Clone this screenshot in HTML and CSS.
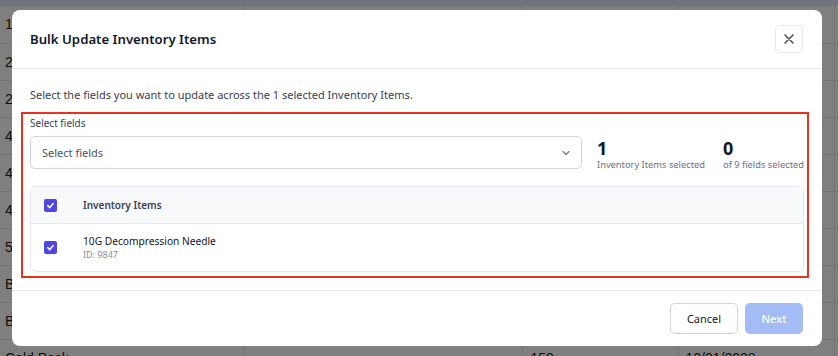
FILE: index.html
```html
<!DOCTYPE html>
<html lang="en">
<head>
  <meta charset="UTF-8" />
  <title>Bulk Update Inventory Items</title>
  <link rel="stylesheet" href="styles.css">
</head>
<body>
  <div class="page">
    <div class="top-band"></div>
    <table class="bg-table">
      <tr><td>14G Decompression Needle</td><td></td><td>25</td><td>03/14/2027</td><td></td></tr>
      <tr><td>22G IV Catheter</td><td></td><td>120</td><td>06/30/2027</td><td></td></tr>
      <tr><td>24G IV Catheter</td><td></td><td>80</td><td>06/30/2027</td><td></td></tr>
      <tr><td>4x4 Gauze Pads</td><td></td><td>400</td><td>11/01/2028</td><td></td></tr>
      <tr><td>4.5 in Bandage Roll</td><td></td><td>60</td><td>09/15/2028</td><td></td></tr>
      <tr><td>4.5 in Elastic Wrap</td><td></td><td>45</td><td>09/15/2028</td><td></td></tr>
      <tr><td>5ml Syringe</td><td></td><td>200</td><td>01/20/2028</td><td></td></tr>
      <tr><td>Burn Dressing</td><td></td><td>30</td><td>04/10/2028</td><td></td></tr>
      <tr><td>BVM Adult</td><td></td><td>12</td><td>08/05/2029</td><td></td></tr>
      <tr><td>Cold Pack</td><td></td><td>150</td><td>12/01/2028</td><td></td></tr>
    </table>
  </div>

  <div class="overlay"></div>

  <div class="modal">
    <div class="modal-header">
      <h2>Bulk Update Inventory Items</h2>
      <button class="close-btn" aria-label="Close">
        <svg width="12" height="12" viewBox="0 0 12 12">
          <path d="M2 2 L10 10 M10 2 L2 10" stroke="#374151" stroke-width="1.4" stroke-linecap="round" fill="none"/>
        </svg>
      </button>
    </div>

    <div class="modal-body">
      <p class="intro">Select the fields you want to update across the 1 selected Inventory Items.</p>

      <div class="highlight">
        <div class="field-row">
          <div class="field">
            <label class="field-label">Select fields</label>
            <div class="select">
              <span>Select fields</span>
              <svg width="10" height="10" viewBox="0 0 10 10">
                <path d="M2 3.5 L5 6.5 L8 3.5" stroke="#6b7280" stroke-width="1.1" fill="none" stroke-linecap="round" stroke-linejoin="round"/>
              </svg>
            </div>
          </div>
          <div class="stat">
            <div class="stat-num">1</div>
            <div class="stat-label">Inventory Items selected</div>
          </div>
          <div class="stat">
            <div class="stat-num">0</div>
            <div class="stat-label">of 9 fields selected</div>
          </div>
        </div>

        <div class="items">
          <div class="items-head">
            <span class="check"><svg width="9" height="9" viewBox="0 0 10 10"><path d="M2 5.2 L4.2 7.3 L8 2.8" stroke="#fff" stroke-width="1.8" fill="none" stroke-linecap="round" stroke-linejoin="round"/></svg></span>
            <span class="head-title">Inventory Items</span>
          </div>
          <div class="item-row">
            <span class="check"><svg width="9" height="9" viewBox="0 0 10 10"><path d="M2 5.2 L4.2 7.3 L8 2.8" stroke="#fff" stroke-width="1.8" fill="none" stroke-linecap="round" stroke-linejoin="round"/></svg></span>
            <div class="item-text">
              <div class="item-name">10G Decompression Needle</div>
              <div class="item-id">ID: 9847</div>
            </div>
          </div>
        </div>
      </div>
    </div>

    <div class="modal-footer">
      <button class="btn btn-cancel">Cancel</button>
      <button class="btn btn-next">Next</button>
    </div>
  </div>
</body>
</html>
```

FILE: styles.css
```css
* {
  margin: 0;
  padding: 0;
  box-sizing: border-box;
}

body {
  font-family: "Noto Sans", "Open Sans", sans-serif;
  width: 838px;
  height: 356px;
  overflow: hidden;
  background: #ffffff;
}

/* page behind the dialog */
.page {
  width: 838px;
}

.top-band {
  height: 6px;
  background: #e2e8f7;
}

.bg-table {
  border-collapse: collapse;
  table-layout: fixed;
  width: 844px;
  font-family: "Liberation Sans", sans-serif;
  font-size: 14px;
  color: #1a1a1a;
}

.bg-table td {
  height: 37px;
  border-bottom: 1px solid #e6e6e6;
  border-right: 1px solid #e6e6e6;
  padding: 0 7px;
  white-space: nowrap;
  overflow: hidden;
}

.bg-table td:nth-child(1) { width: 243px; padding-left: 5px; }
.bg-table td:nth-child(2) { width: 279px; }
.bg-table td:nth-child(3) { width: 156px; padding-left: 8px; }
.bg-table td:nth-child(4) { width: 156px; }
.bg-table td:nth-child(5) { width: 10px; }

.overlay {
  position: absolute;
  inset: 0;
  background: rgba(0, 0, 0, 0.5);
}

/* dialog */
.modal {
  position: absolute;
  left: 12px;
  top: 10px;
  width: 810px;
  height: 336px;
  background: #ffffff;
  border-radius: 8px;
  display: flex;
  flex-direction: column;
  color: #111827;
}

.modal-header {
  height: 61px;
  display: flex;
  align-items: center;
  justify-content: space-between;
  padding: 0 19px 0 18px;
  border-bottom: 1px solid #e5e7eb;
}

.modal-header h2 {
  font-size: 13.2px;
  font-weight: 600;
  color: #111827;
}

.close-btn {
  width: 28px;
  height: 28px;
  border: 1px solid #e5e7eb;
  border-radius: 5px;
  background: #ffffff;
  display: flex;
  align-items: center;
  justify-content: center;
}

.modal-body {
  padding: 17px 18px 12px 18px;
  flex: 1;
}

.intro {
  font-size: 11px;
  color: #374151;
  line-height: 18px;
  margin-bottom: 8px;
}

.highlight {
  border: 2px solid #e8321f;
  margin: 0 -5px 0 -9px;
  padding: 2px 3px 4px 7px;
}

.field-row {
  display: flex;
  align-items: flex-start;
}

.field {
  width: 552px;
}

.field-label {
  display: block;
  font-size: 10px;
  line-height: 14px;
  color: #374151;
  margin-bottom: 6px;
}

.select {
  height: 33px;
  border: 1px solid #d1d5db;
  border-radius: 5px;
  display: flex;
  align-items: center;
  justify-content: space-between;
  padding: 0 10px 0 11px;
  font-size: 11px;
  color: #4b5563;
}

.stat {
  margin-top: 22px;
  margin-left: 15px;
}

.stat + .stat {
  margin-left: 18px;
}

.stat-num {
  font-size: 18px;
  font-weight: 700;
  line-height: 20px;
  color: #111827;
}

.stat-label {
  font-size: 9.3px;
  line-height: 13px;
  color: #6b7280;
  white-space: nowrap;
}

.items {
  margin-top: 15px;
  border: 1px solid #e5e7eb;
  border-radius: 6px;
  overflow: hidden;
}

.items-head {
  height: 37px;
  background: #f8f9fb;
  border-bottom: 1px solid #e5e7eb;
  display: flex;
  align-items: center;
  padding-left: 13px;
}

.check {
  width: 13px;
  height: 13px;
  border-radius: 2px;
  background: #5046e5;
  display: inline-flex;
  align-items: center;
  justify-content: center;
  flex-shrink: 0;
}

.head-title {
  margin-left: 26px;
  font-size: 10px;
  font-weight: 600;
  color: #374151;
}

.item-row {
  height: 47px;
  display: flex;
  align-items: center;
  padding-left: 13px;
}

.item-text {
  margin-left: 26px;
}

.item-name {
  font-size: 10.2px;
  line-height: 14px;
  color: #111827;
}

.item-id {
  font-size: 9px;
  line-height: 13px;
  color: #8b929c;
}

.modal-footer {
  height: 57px;
  border-top: 1px solid #e5e7eb;
  display: flex;
  align-items: center;
  justify-content: flex-end;
  gap: 7px;
  padding-right: 19px;
}

.btn {
  height: 31px;
  border-radius: 5px;
  font-family: "Noto Sans", sans-serif;
  font-size: 11px;
}

.btn-cancel {
  width: 68px;
  background: #ffffff;
  border: 1px solid #d1d5db;
  color: #111827;
}

.btn-next {
  width: 58px;
  background: #a4bcf6;
  border: none;
  color: #ffffff;
  font-weight: 500;
}
```
